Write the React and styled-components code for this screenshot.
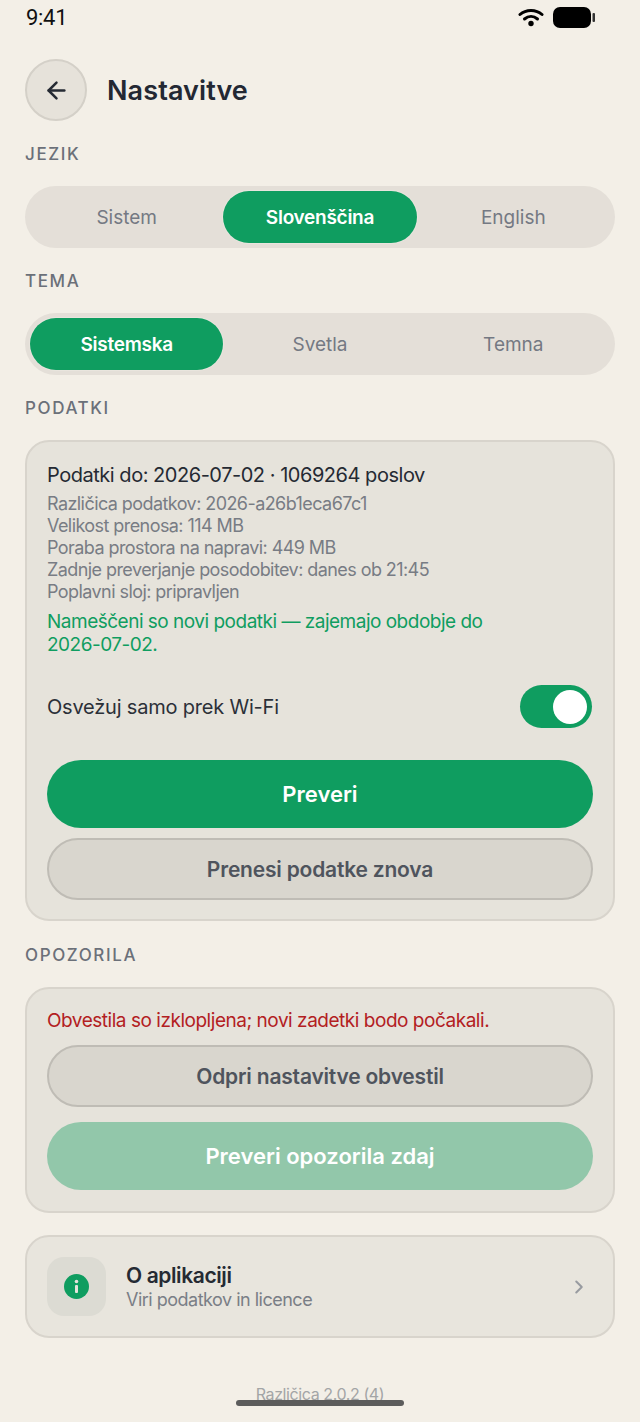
import React from 'react';
import styled, { createGlobalStyle } from 'styled-components';
import { ArrowLeft, ChevronRight } from 'lucide-react';

const Global = createGlobalStyle`
  html, body { margin: 0; padding: 0; background: #f3efe7; }
  body { font-family: Inter, "Liberation Sans", sans-serif; }
  * { box-sizing: border-box; }
`;

const Page = styled.div`
  position: relative;
  width: 640px;
  height: 1422px;
  overflow: hidden;
  background: #f3efe7;
  padding: 0 25px;
  display: flex;
  flex-direction: column;
`;

const StatusBar = styled.div`
  height: 34px;
  display: flex;
  align-items: center;
  justify-content: space-between;
  margin: 0 20px 0 1px;
`;

const Clock = styled.span`
  font-size: 22px;
  color: #111;
  letter-spacing: -0.3px;
  font-family: Roboto, sans-serif;
`;

const StatusIcons = styled.div`
  display: flex;
  align-items: center;
  gap: 9px;
`;

const Header = styled.div`
  display: flex;
  align-items: center;
  gap: 20px;
  margin-top: 25px;
`;

const BackButton = styled.div`
  width: 62px;
  height: 62px;
  border-radius: 50%;
  background: #e6e2da;
  border: 2px solid #d4d0c8;
  display: flex;
  align-items: center;
  justify-content: center;
  color: #252a33;
`;

const Title = styled.h1`
  margin: 0;
  font-size: 27px;
  font-weight: 600;
  color: #232833;
  font-family: Inter, sans-serif;
  letter-spacing: 0.1px;
`;

const SectionLabel = styled.div`
  font-size: 17px;
  line-height: 20px;
  font-weight: 500;
  letter-spacing: 1.6px;
  color: #6b7079;
  margin-top: ${p => p.$top}px;
  margin-bottom: ${p => p.$bottom}px;
`;

const Segmented = styled.div`
  height: 62px;
  border-radius: 31px;
  background: #e4dfd8;
  padding: 5px;
  display: grid;
  grid-template-columns: repeat(3, 1fr);
`;

const Segment = styled.div`
  border-radius: 27px;
  display: flex;
  align-items: center;
  justify-content: center;
  font-size: 19px;
  letter-spacing: ${p => (p.$active ? '-0.27px' : '0')};
  font-weight: ${p => (p.$active ? 600 : 400)};
  color: ${p => (p.$active ? '#fff' : '#747983')};
  background: ${p => (p.$active ? '#0f9d60' : 'transparent')};
  box-shadow: ${p => (p.$active ? '0 0 0 1px #e9e5de' : 'none')};
`;

const Card = styled.div`
  border-radius: 24px;
  background: #e6e3db;
  border: 2px solid #d8d4cc;
  padding: ${p => p.$pad || '0 20px'};
  height: ${p => p.$h}px;
`;

const Lead = styled.div`
  font-size: 20px;
  line-height: 24px;
  letter-spacing: -0.47px;
  color: #252a33;
`;

const Meta = styled.div`
  font-size: 18px;
  line-height: 22px;
  letter-spacing: -0.57px;
  color: #787c84;
`;

const MetaGroup = styled.div`
  margin-top: 6px;
`;

const Success = styled.div`
  font-size: 19px;
  line-height: 23px;
  letter-spacing: -0.5px;
  color: #0f9d60;
  margin-top: 7px;
  width: 450px;
`;

const ToggleRow = styled.div`
  display: flex;
  align-items: center;
  justify-content: space-between;
  margin-top: 29px;
  height: 43px;
`;

const ToggleLabel = styled.span`
  font-size: 20px;
  letter-spacing: -0.2px;
  color: #2b3038;
`;

const Toggle = styled.div`
  width: 72px;
  height: 43px;
  border-radius: 22px;
  background: #0f9d60;
  display: flex;
  align-items: center;
  justify-content: flex-end;
  padding-right: 5px;
  margin-right: 1px;
`;

const Knob = styled.div`
  width: 34px;
  height: 34px;
  border-radius: 50%;
  background: #fff;
`;

const Primary = styled.div`
  height: 68px;
  border-radius: 34px;
  background: ${p => (p.$muted ? '#92c7aa' : '#0f9d60')};
  color: #fff;
  font-size: 22px;
  font-weight: 600;
  display: flex;
  align-items: center;
  justify-content: center;
  margin-top: ${p => p.$top}px;
`;

const Secondary = styled.div`
  height: 62px;
  border-radius: 31px;
  background: #d9d6ce;
  border: 2px solid #bfbcb5;
  color: #4f545d;
  font-size: 21px;
  font-weight: 600;
  letter-spacing: -0.2px;
  display: flex;
  align-items: center;
  justify-content: center;
  margin-top: ${p => p.$top}px;
`;

const Warning = styled.div`
  font-size: 19px;
  line-height: 23px;
  letter-spacing: -0.47px;
  color: #b3201f;
`;

const AboutCard = styled(Card)`
  display: flex;
  align-items: center;
  margin-top: 22px;
  background: #e8e5dd;
`;

const IconBox = styled.div`
  width: 59px;
  height: 59px;
  border-radius: 17px;
  background: #dcdbd3;
  display: flex;
  align-items: center;
  justify-content: center;
  flex: none;
`;

const AboutText = styled.div`
  margin-left: 20px;
  padding-top: 2px;
  flex: 1;
`;

const AboutTitle = styled.div`
  font-size: 21px;
  line-height: 24px;
  font-weight: 600;
  letter-spacing: -0.4px;
  color: #252a33;
`;

const AboutSub = styled.div`
  font-size: 18px;
  line-height: 24px;
  letter-spacing: -0.5px;
  color: #7a7e86;
`;

const Chevron = styled(ChevronRight)`
  margin-right: 3px;
`;

const Version = styled.div`
  text-align: center;
  font-size: 16px;
  line-height: 20px;
  letter-spacing: -0.4px;
  color: #a3a5a6;
  margin-top: 46px;
`;

const HomeBar = styled.div`
  position: absolute;
  left: 236px;
  top: 1400px;
  width: 168px;
  height: 6px;
  border-radius: 3px;
  background: #5c5c5c;
`;

export default function App() {
  return (
    <Page>
      <Global />
      <StatusBar>
        <Clock>9:41</Clock>
        <StatusIcons>
          <svg width="26" height="20" viewBox="0 0 26 20">
            <g fill="none" stroke="#000" strokeWidth="3" strokeLinecap="round">
              <path d="M2 7.5C8 2 18 2 24 7.5" />
              <path d="M6.5 12c4-3.4 9-3.4 13 0" />
            </g>
            <circle cx="13" cy="16.5" r="2.7" fill="#000" />
          </svg>
          <svg width="42" height="21" viewBox="0 0 42 21">
            <rect x="0" y="0" width="38" height="21" rx="7" fill="#000" />
            <rect x="39.5" y="6" width="2.5" height="9" rx="1" fill="#333" />
          </svg>
        </StatusIcons>
      </StatusBar>
      <Header>
        <BackButton>
          <ArrowLeft size={27} strokeWidth={2.2} />
        </BackButton>
        <Title>Nastavitve</Title>
      </Header>

      <SectionLabel $top={23} $bottom={22}>JEZIK</SectionLabel>
      <Segmented>
        <Segment>Sistem</Segment>
        <Segment $active>Slovenščina</Segment>
        <Segment>English</Segment>
      </Segmented>

      <SectionLabel $top={23} $bottom={22}>TEMA</SectionLabel>
      <Segmented>
        <Segment $active>Sistemska</Segment>
        <Segment>Svetla</Segment>
        <Segment>Temna</Segment>
      </Segmented>

      <SectionLabel $top={23} $bottom={22}>PODATKI</SectionLabel>
      <Card $h={481} $pad="21px 20px">
        <Lead>Podatki do: 2026-07-02 · 1069264 poslov</Lead>
        <MetaGroup>
          <Meta>Različica podatkov: 2026-a26b1eca67c1</Meta>
          <Meta>Velikost prenosa: 114 MB</Meta>
          <Meta>Poraba prostora na napravi: 449 MB</Meta>
          <Meta>Zadnje preverjanje posodobitev: danes ob 21:45</Meta>
          <Meta>Poplavni sloj: pripravljen</Meta>
        </MetaGroup>
        <Success>Nameščeni so novi podatki — zajemajo obdobje do 2026-07-02.</Success>
        <ToggleRow>
          <ToggleLabel>Osvežuj samo prek Wi-Fi</ToggleLabel>
          <Toggle><Knob /></Toggle>
        </ToggleRow>
        <Primary $top={32}>Preveri</Primary>
        <Secondary $top={10}>Prenesi podatke znova</Secondary>
      </Card>

      <SectionLabel $top={24} $bottom={22}>OPOZORILA</SectionLabel>
      <Card $h={226} $pad="20px 20px">
        <Warning>Obvestila so izklopljena; novi zadetki bodo počakali.</Warning>
        <Secondary $top={13}>Odpri nastavitve obvestil</Secondary>
        <Primary $muted $top={15}>Preveri opozorila zdaj</Primary>
      </Card>

      <AboutCard $h={103}>
        <IconBox>
          <svg width="25" height="25" viewBox="0 0 25 25">
            <circle cx="12.5" cy="12.5" r="12.5" fill="#0f9d60" />
            <rect x="11" y="11" width="3" height="8" rx="1" fill="#e6e3db" />
            <circle cx="12.5" cy="7.5" r="1.8" fill="#e6e3db" />
          </svg>
        </IconBox>
        <AboutText>
          <AboutTitle>O aplikaciji</AboutTitle>
          <AboutSub>Viri podatkov in licence</AboutSub>
        </AboutText>
        <Chevron size={22} color="#989ba0" strokeWidth={2.2} />
      </AboutCard>

      <Version>Različica 2.0.2 (4)</Version>
      <HomeBar />
    </Page>
  );
}
